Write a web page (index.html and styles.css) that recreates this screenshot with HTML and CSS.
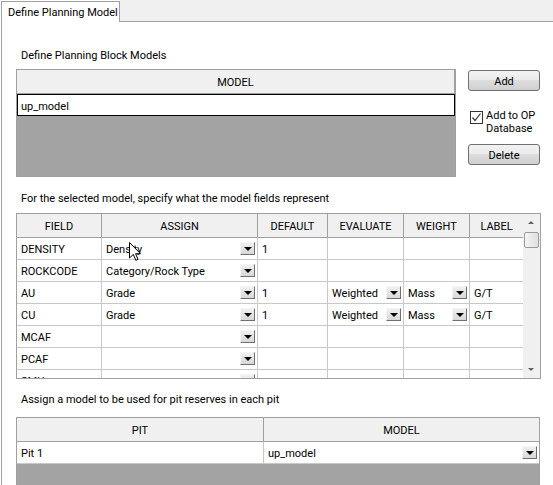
FILE: index.html
```html
<!DOCTYPE html>
<html lang="en">
<head>
  <meta charset="UTF-8">
  <title>Define Planning Model</title>
  <link rel="stylesheet" href="styles.css">
</head>
<body>
  <div class="tabs">
    <div class="tab">Define Planning Model</div>
    <div class="tab-rest"></div>
  </div>

  <div class="panel">
    <div class="caption cap-models">Define Planning Block Models</div>

    <div class="models">
      <div class="grid grid-models">
        <table>
          <thead>
            <tr><th>MODEL</th></tr>
          </thead>
          <tbody>
            <tr><td class="focus">up_model</td></tr>
          </tbody>
        </table>
      </div>

      <div class="side">
        <button class="btn">Add</button>
        <label class="check">
          <span class="box">
            <svg width="11" height="11" viewBox="0 0 11 11"><path d="M1.5 5.5 L4 8.5 L9.5 1.5" fill="none" stroke="#333" stroke-width="1.2"/></svg>
          </span>
          <span class="check-text">Add to OP<br>Database</span>
        </label>
        <button class="btn btn-delete">Delete</button>
      </div>
    </div>

    <div class="caption cap-fields">For the selected model, specify what the model fields represent</div>

    <div class="grid grid-fields">
      <table>
        <colgroup>
          <col style="width:85px">
          <col style="width:156px">
          <col style="width:70px">
          <col style="width:76px">
          <col style="width:66px">
          <col style="width:53px">
        </colgroup>
        <thead>
          <tr><th>FIELD</th><th>ASSIGN</th><th>DEFAULT</th><th>EVALUATE</th><th>WEIGHT</th><th class="last">LABEL</th></tr>
        </thead>
        <tbody>
          <tr>
            <td>DENSITY</td>
            <td class="combo">Density<span class="drop"></span></td>
            <td>1</td><td></td><td></td><td class="last"></td>
          </tr>
          <tr>
            <td>ROCKCODE</td>
            <td class="combo">Category/Rock Type<span class="drop"></span></td>
            <td></td><td></td><td></td><td class="last"></td>
          </tr>
          <tr>
            <td>AU</td>
            <td class="combo">Grade<span class="drop"></span></td>
            <td>1</td>
            <td class="combo">Weighted<span class="drop"></span></td>
            <td class="combo">Mass<span class="drop"></span></td>
            <td class="last">G/T</td>
          </tr>
          <tr>
            <td>CU</td>
            <td class="combo">Grade<span class="drop"></span></td>
            <td>1</td>
            <td class="combo">Weighted<span class="drop"></span></td>
            <td class="combo">Mass<span class="drop"></span></td>
            <td class="last">G/T</td>
          </tr>
          <tr>
            <td>MCAF</td>
            <td class="combo"><span class="drop"></span></td>
            <td></td><td></td><td></td><td class="last"></td>
          </tr>
          <tr>
            <td>PCAF</td>
            <td class="combo"><span class="drop"></span></td>
            <td></td><td></td><td></td><td class="last"></td>
          </tr>
          <tr>
            <td>SMU</td>
            <td class="combo"><span class="drop"></span></td>
            <td></td><td></td><td></td><td class="last"></td>
          </tr>
        </tbody>
      </table>
      <div class="scrollbar">
        <span class="arrow-up"></span>
        <span class="thumb"></span>
        <span class="arrow-down"></span>
      </div>

      <svg class="cursor" width="13" height="20" viewBox="0 0 13 20">
        <path d="M0.5 0.5 L0.5 16 L4.3 12.4 L6.8 18.3 L9 17.4 L6.6 11.7 L11.5 11.7 Z" fill="#fff" stroke="#000" stroke-width="1"/>
      </svg>
    </div>

    <div class="caption cap-pits">Assign a model to be used for pit reserves in each pit</div>

    <div class="grid grid-pits">
      <table>
        <colgroup>
          <col style="width:247px">
          <col style="width:275px">
        </colgroup>
        <thead>
          <tr><th>PIT</th><th class="last">MODEL</th></tr>
        </thead>
        <tbody>
          <tr>
            <td>Pit 1</td>
            <td class="combo last">up_model<span class="drop"></span></td>
          </tr>
        </tbody>
      </table>
    </div>
  </div>
</body>
</html>
```

FILE: styles.css
```css
body {
  margin: 0;
  background: #fff;
  color: #000;
  font-family: Roboto, "Liberation Sans", sans-serif;
  font-size: 11px;
  overflow: hidden;
}
.tabs {
  display: flex;
  height: 22px;
  background: #fff;
}
.tab {
  width: 104px;
  margin: 1px 0 0 1px;
  padding: 3px 7px 0 6px;
  border: 1px solid #a0a0a0;
  border-bottom: none;
  background: #fff;
  line-height: 15px;
  white-space: nowrap;
}
.tab-rest {
  flex: 1;
  background: #f0f0f0;
  border-bottom: 1px solid #a0a0a0;
}
.panel {
  margin-left: 1px;
  border-left: 1px solid #a0a0a0;
  padding: 0 12px 0 14px;
  height: 463px;
}
.caption {
  line-height: 13px;
  padding-left: 5px;
}
.cap-models {
  padding-top: 27px;
  margin-bottom: 7px;
}
.cap-fields {
  margin: 15px 0 8px;
}
.cap-pits {
  margin: 14px 0 11px;
}

/* grids */
.grid {
  position: relative;
  border: 1px solid #a0a0a0;
  background: #a3a3a3;
  overflow: hidden;
}
.grid table {
  border-collapse: separate;
  border-spacing: 0;
  table-layout: fixed;
}
.grid th {
  height: 22px;
  padding: 1px 0 0;
  background: #f0f0f0;
  font-weight: normal;
  border-right: 1px solid #a0a0a0;
  border-bottom: 1px solid #a0a0a0;
  text-align: center;
}
.grid td {
  position: relative;
  height: 19px;
  padding: 2px 0 0 4px;
  background: #fff;
  border-right: 1px solid #c8c8c8;
  border-bottom: 1px solid #c8c8c8;
  white-space: nowrap;
  overflow: hidden;
}
.grid th.last,
.grid td.last {
  border-right: none;
}
.drop {
  position: absolute;
  right: 2px;
  top: 4px;
  width: 13px;
  height: 11px;
  border: 1px solid;
  border-color: #f4f4f4 #707070 #707070 #f4f4f4;
  background: linear-gradient(#f0f0f0, #d8d8d8);
}
.drop::after {
  content: "";
  position: absolute;
  left: 3px;
  top: 4px;
  border-left: 4px solid transparent;
  border-right: 4px solid transparent;
  border-top: 4px solid #000;
}

.models {
  display: flex;
  gap: 12px;
}
.grid-models {
  width: 438px;
  height: 106px;
}
.grid-models table {
  width: 100%;
}
.grid-models td.focus {
  height: 18px;
  border: 1px solid #000;
  padding-left: 3px;
}

.side {
  display: flex;
  flex-direction: column;
  width: 72px;
  padding-top: 1px;
}
.btn {
  height: 21px;
  padding: 1px 0 0;
  border: 1px solid #707070;
  border-radius: 3px;
  background: linear-gradient(#f2f2f2 0%, #ebebeb 45%, #dddddd 50%, #cfcfcf 100%);
  font: inherit;
  color: #000;
}
.check {
  display: flex;
  gap: 3px;
  margin: 18px 0 0 2px;
  line-height: 13px;
}
.box {
  width: 11px;
  height: 11px;
  margin-top: 2px;
  border: 1px solid #333;
  background: #fff;
}
.box svg {
  display: block;
}
.btn-delete {
  margin-top: 9px;
}

.grid-fields {
  display: flex;
  width: 523px;
  height: 164px;
  background: #fff;
}
.grid-fields table {
  width: 506px;
}
.scrollbar {
  position: relative;
  width: 17px;
  background: #f0f0f0;
}
.arrow-up {
  position: absolute;
  left: 5px;
  top: 7px;
  border-left: 3px solid transparent;
  border-right: 3px solid transparent;
  border-bottom: 3px solid #606060;
}
.thumb {
  position: absolute;
  left: 1px;
  top: 18px;
  width: 13px;
  height: 14px;
  border: 1px solid #9a9a9a;
  border-radius: 2px;
  background: linear-gradient(to right, #f4f4f4, #e0e0e0);
}
.arrow-down {
  position: absolute;
  left: 5px;
  bottom: 7px;
  border-left: 3px solid transparent;
  border-right: 3px solid transparent;
  border-top: 3px solid #606060;
}
.cursor {
  position: absolute;
  left: 112px;
  top: 28px;
}

.grid-pits {
  width: 522px;
  height: 80px;
}
```
